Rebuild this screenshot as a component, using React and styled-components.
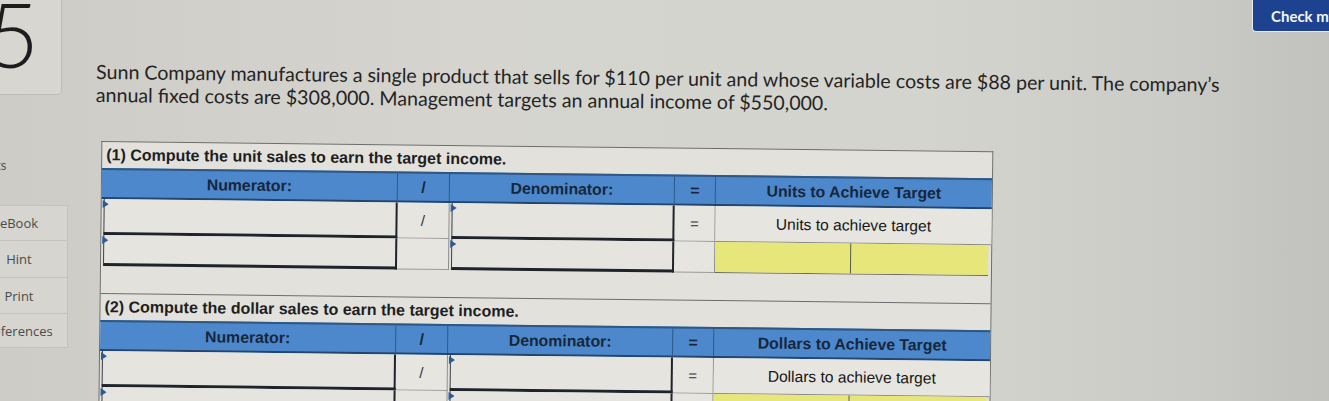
import styled, { createGlobalStyle } from 'styled-components';

const GlobalStyle = createGlobalStyle`
  html, body {
    margin: 0;
    padding: 0;
  }
  body {
    width: 1329px;
    height: 401px;
    overflow: hidden;
    background: linear-gradient(90deg, #cdccc7 0%, #d5d4cf 35%, #d4d4cf 70%, #cbccc7 88%, #c1c2bd 100%);
    font-family: "Lato", "Open Sans", sans-serif;
    color: #262626;
  }
`;

const Page = styled.div`
  display: flex;
  align-items: flex-start;
  height: 401px;
`;

const Sidebar = styled.aside`
  flex-shrink: 0;
  width: 108px;
  margin-left: -40px;
  display: flex;
  flex-direction: column;
`;

const QuestionBox = styled.div`
  width: 102px;
  height: 95px;
  box-sizing: border-box;
  border: 1px solid #bdbcb7;
  border-top: none;
  border-radius: 0 0 5px 5px;
  background: #d7d6d1;
  display: flex;
  justify-content: center;
  overflow: hidden;
`;

const QuestionNumber = styled.span`
  font-family: "Lato", sans-serif;
  font-weight: 300;
  font-size: 90px;
  line-height: 1;
  margin: -12px 0 0 4px;
  color: #1d1d1d;
`;

const SideLabel = styled.div`
  margin: 62px 0 0 36px;
  font-size: 13px;
  color: #555;
  height: 16px;
`;

const ToolList = styled.div`
  margin: 32px 0 0 10px;
  width: 98px;
  display: flex;
  flex-direction: column;
`;

const ToolButton = styled.div`
  height: ${(p) => p.$h}px;
  box-sizing: border-box;
  border: 1px solid #c3c2bd;
  border-top: ${(p) => (p.$first ? '1px solid #c3c2bd' : 'none')};
  background: #d6d5d0;
  display: flex;
  align-items: center;
  justify-content: center;
  font-family: "Open Sans", sans-serif;
  font-size: 13px;
  color: #4b4b4b;
`;

const Content = styled.main`
  flex-shrink: 0;
  width: 1150px;
  margin-left: 29px;
  padding-top: 60px;
  transform: rotate(0.65deg);
  transform-origin: 0 0;
`;

const Prompt = styled.p`
  margin: 0;
  font-size: 19.6px;
  line-height: 23px;
  color: #242424;
  white-space: nowrap;
`;

const Sheet = styled.div`
  margin: 35px 0 0 6px;
  width: 890px;
  border: 1px solid #6d6d6d;
  border-bottom: none;
  background: #e2e1dc;
  font-family: "Liberation Sans", Arial, sans-serif;
`;

const SectionTitle = styled.div`
  height: 26px;
  padding-left: 4px;
  display: flex;
  align-items: center;
  font-weight: 700;
  font-size: 16px;
  color: #1e1e1e;
  white-space: nowrap;
`;

const Row = styled.div`
  display: grid;
  grid-template-columns: 296px 52px 225px 41px 1fr;
  height: ${(p) => p.$h}px;
`;

const HeaderRow = styled(Row)`
  background: #4c88cb;
  border-top: 2px solid #2f5784;
  border-bottom: 2px solid #24466d;
  box-sizing: border-box;
`;

const HeadCell = styled.div`
  display: flex;
  align-items: center;
  justify-content: center;
  font-weight: 700;
  font-size: 15.8px;
  color: #17263b;
  white-space: nowrap;
  border-right: ${(p) => (p.$last ? 'none' : '1px solid #2f5a8a')};
`;

const InputCell = styled.div`
  position: relative;
  margin-left: 2px;
  background: #e5e4df;
  border-left: 1px solid #3a3f48;
  border-right: 2px solid #1f242c;
  border-bottom: 3px solid #1f242c;

  &::before {
    content: '';
    position: absolute;
    left: -2px;
    top: 1px;
    border-left: 6px solid #2c5a92;
    border-top: 4px solid transparent;
    border-bottom: 4px solid transparent;
  }
`;

const OpCell = styled.div`
  display: flex;
  align-items: center;
  justify-content: center;
  background: #e6e5e0;
  border-right: 1px solid #8f8f8f;
  border-bottom: 1px solid #9a9a9a;
  font-size: 15px;
  color: #333;
`;

const ResultCell = styled.div`
  display: flex;
  align-items: center;
  justify-content: center;
  background: #e6e5e0;
  border-bottom: 1px solid #8a8a8a;
  font-size: 15.6px;
  color: #161616;
  white-space: nowrap;
`;

const AnswerPair = styled.div`
  display: grid;
  grid-template-columns: 135px 1fr;
  margin-right: 3px;
  border-bottom: 1px solid #6a6a6a;
`;

const AnswerCell = styled.div`
  background: #e7e67a;
  border-left: ${(p) => (p.$split ? '1px solid #5a5a4a' : 'none')};
`;

const Spacer = styled.div`
  height: 27px;
  border-bottom: 1px solid #6d6d6d;
`;

const Aside = styled.div`
  flex-shrink: 0;
  margin-left: 5px;
`;

const CheckButton = styled.div`
  width: 130px;
  height: 32px;
  box-sizing: border-box;
  padding-left: 18px;
  display: flex;
  align-items: center;
  background: #1c4290;
  border: 1px solid #e9ecf5;
  border-top: none;
  border-radius: 0 0 0 4px;
  color: #f4f6fb;
  font-family: "Lato", sans-serif;
  font-weight: 700;
  font-size: 15px;
  white-space: nowrap;
`;

const sections = [
  {
    title: '(1) Compute the unit sales to earn the target income.',
    result: 'Units to Achieve Target',
    label: 'Units to achieve target',
    spacer: true,
  },
  {
    title: '(2) Compute the dollar sales to earn the target income.',
    result: 'Dollars to Achieve Target',
    label: 'Dollars to achieve target',
    spacer: false,
  },
];

const tools = [
  { name: 'eBook', h: 36 },
  { name: 'Hint', h: 37 },
  { name: 'Print', h: 36 },
  { name: 'References', h: 34 },
];

function Section({ title, result, label, spacer }) {
  return (
    <>
      <SectionTitle>{title}</SectionTitle>
      <HeaderRow $h={31}>
        <HeadCell>Numerator:</HeadCell>
        <HeadCell>/</HeadCell>
        <HeadCell>Denominator:</HeadCell>
        <HeadCell>=</HeadCell>
        <HeadCell $last>{result}</HeadCell>
      </HeaderRow>
      <Row $h={36}>
        <InputCell />
        <OpCell>/</OpCell>
        <InputCell />
        <OpCell>=</OpCell>
        <ResultCell>{label}</ResultCell>
      </Row>
      <Row $h={31}>
        <InputCell />
        <OpCell />
        <InputCell />
        <OpCell />
        <AnswerPair>
          <AnswerCell />
          <AnswerCell $split />
        </AnswerPair>
      </Row>
      {spacer && <Spacer />}
    </>
  );
}

export default function App() {
  return (
    <>
      <GlobalStyle />
      <Page>
        <Sidebar>
          <QuestionBox>
            <QuestionNumber>5</QuestionNumber>
          </QuestionBox>
          <SideLabel>ts</SideLabel>
          <ToolList>
            {tools.map((t, i) => (
              <ToolButton key={t.name} $h={t.h} $first={i === 0}>
                {t.name}
              </ToolButton>
            ))}
          </ToolList>
        </Sidebar>

        <Content>
          <Prompt>
            Sunn Company manufactures a single product that sells for $110 per unit and whose variable costs are $88 per unit. The company’s
            <br />
            annual fixed costs are $308,000. Management targets an annual income of $550,000.
          </Prompt>
          <Sheet>
            {sections.map((s) => (
              <Section key={s.title} {...s} />
            ))}
          </Sheet>
        </Content>

        <Aside>
          <CheckButton>Check my work</CheckButton>
        </Aside>
      </Page>
    </>
  );
}
